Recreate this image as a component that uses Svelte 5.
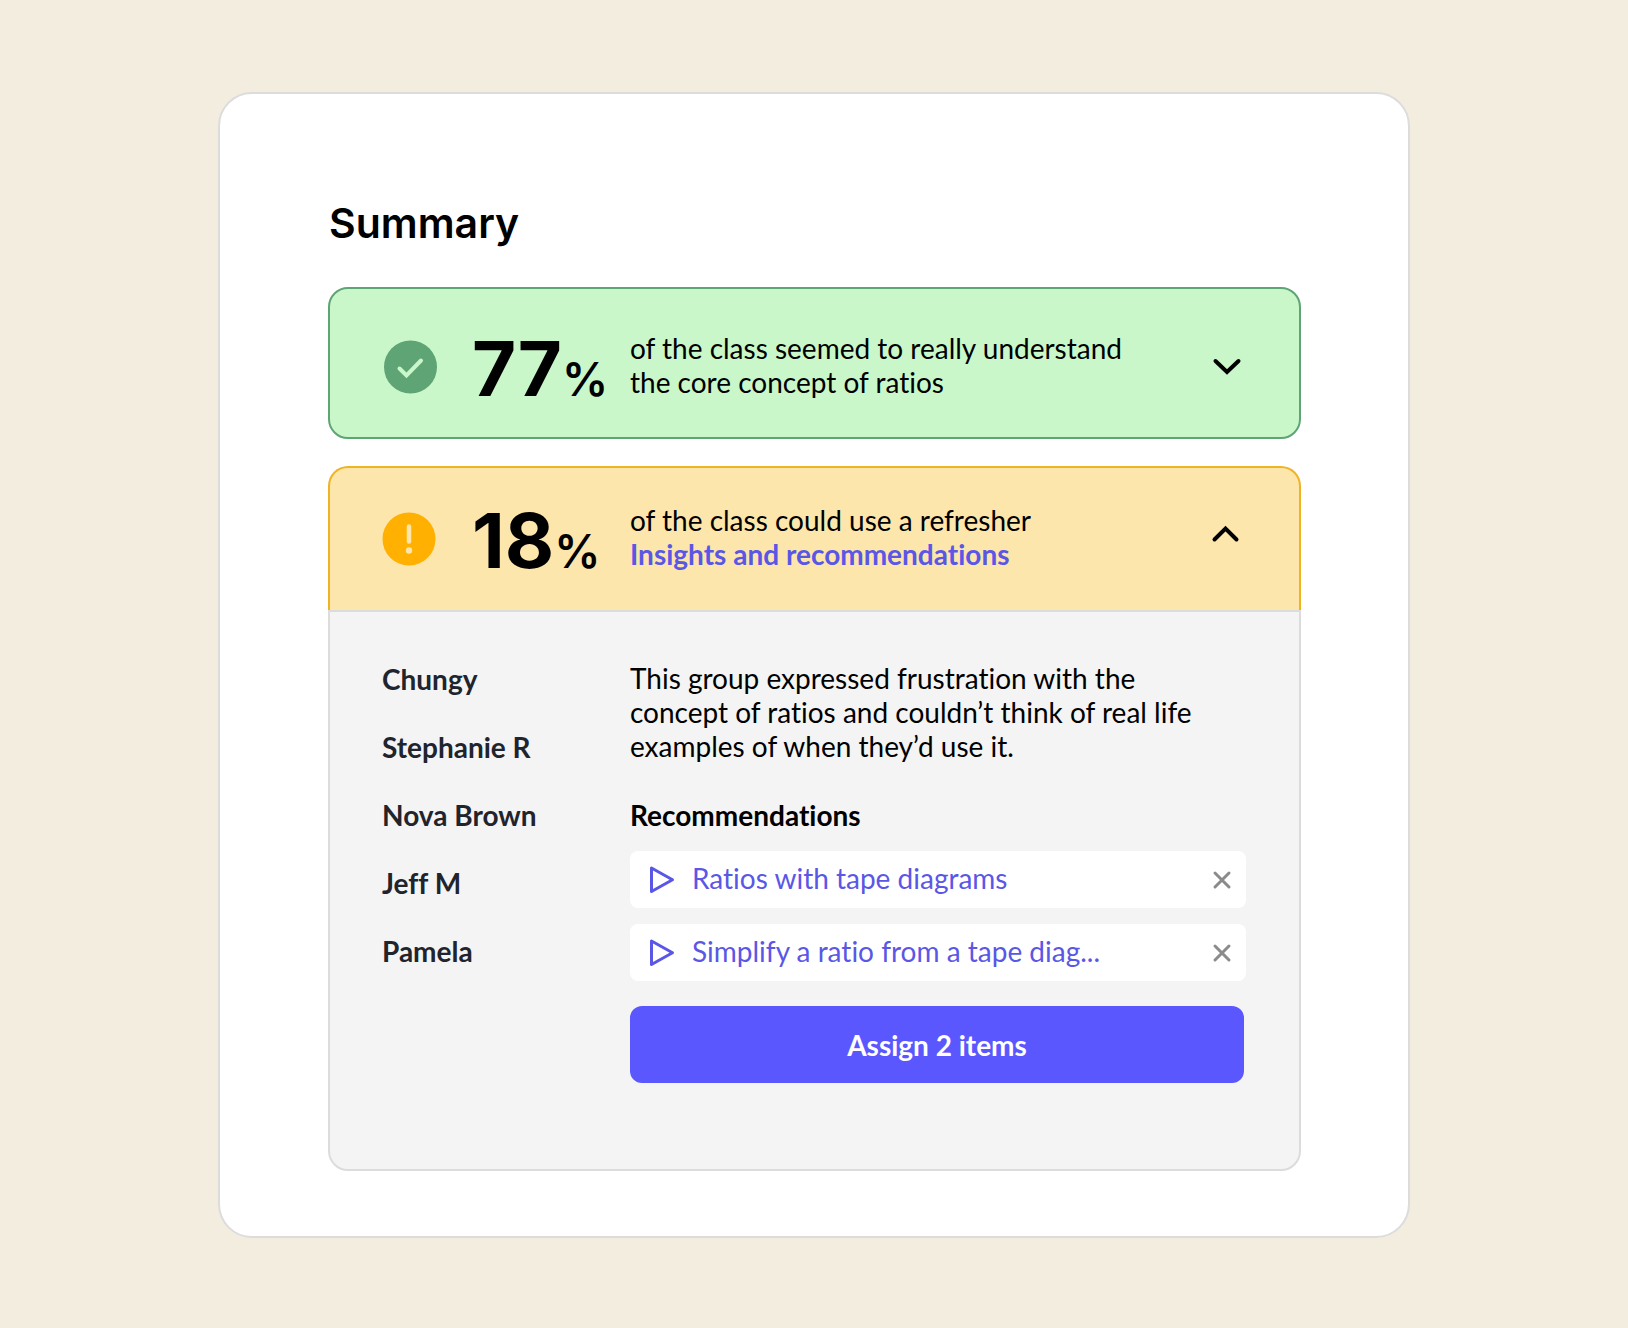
<script>
    let expanded = true;
    let students = ["Chungy", "Stephanie R", "Nova Brown", "Jeff M", "Pamela"];
    let items = [
        { id: 1, title: "Ratios with tape diagrams" },
        { id: 2, title: "Simplify a ratio from a tape diag..." }
    ];

    const toggle = () => {
        expanded = !expanded;
    };

    const removeItem = id => {
        items = items.filter(item => item.id != id);
    };
</script>

<main class="card">
    <h1>Summary</h1>

    <section class="group good">
        <div class="head">
            <svg class="status" viewBox="0 0 54 54" aria-hidden="true">
                <circle cx="27.5" cy="27" r="26.5" fill="#5fa475" />
                <path d="M16.5 28.5 L23.5 35.5 L38 20.5" fill="none" stroke="#c9f7ca" stroke-width="4" stroke-linecap="round" stroke-linejoin="miter" />
            </svg>
            <p class="percent">77<span>%</span></p>
            <p class="text">of the class seemed to really understand the core concept of ratios</p>
            <button class="chevron" aria-label="Show details">
                <svg viewBox="0 0 28 18"><path d="M2.5 3 L14 14 L25.5 3" /></svg>
            </button>
        </div>
    </section>

    <section class="group warn">
        <div class="head">
            <svg class="status" viewBox="0 0 54 54" aria-hidden="true">
                <circle cx="26" cy="27" r="26.5" fill="#ffb000" />
                <path d="M26 14.5 V29.5" stroke="#fde6ab" stroke-width="4.5" stroke-linecap="round" />
                <circle cx="26" cy="38.5" r="3.2" fill="#fde6ab" />
            </svg>
            <p class="percent">18<span>%</span></p>
            <p class="text">
                of the class could use a refresher<br />
                <a href="#insights">Insights and recommendations</a>
            </p>
            <button class="chevron" aria-label="Toggle details" aria-expanded={expanded} on:click={toggle}>
                <svg viewBox="0 0 28 18" class:closed={!expanded}><path d="M1.5 14.5 L12.5 3.5 L23.5 14.5" /></svg>
            </button>
        </div>

        {#if expanded}
            <div class="details" id="insights">
                <ul class="students">
                    {#each students as student}
                        <li>{student}</li>
                    {/each}
                </ul>
                <div class="insights">
                    <p>This group expressed frustration with the concept of ratios and couldn’t think of real life examples of when they’d use it.</p>
                    <h2>Recommendations</h2>
                    <ul class="items">
                        {#each items as item (item.id)}
                            <li>
                                <svg class="play" viewBox="0 0 26 28" aria-hidden="true">
                                    <path d="M2.5 2 V25.5 L23.5 13.7 Z" />
                                </svg>
                                <a href="#item-{item.id}">{item.title}</a>
                                <button class="remove" aria-label="Remove {item.title}" on:click={() => removeItem(item.id)}>
                                    <svg viewBox="0 0 18 18"><path d="M2 2 L16 16 M16 2 L2 16" /></svg>
                                </button>
                            </li>
                        {/each}
                    </ul>
                    <button class="assign">Assign {items.length} items</button>
                </div>
            </div>
        {/if}
    </section>
</main>

<style>
    :global(body) {
        background-color: #f3ede0;
        padding: 92px 24px;
        font-family: Lato, sans-serif;
        font-size: 28px;
        line-height: 34px;
        font-variant-ligatures: none;
        color: #000;
    }

    h1, h2, p, ul {
        margin: 0;
        padding: 0;
        font-size: 28px;
    }

    ul {
        list-style: none;
    }

    a {
        color: #5a57e6;
        text-decoration: none;
    }

    button {
        font: inherit;
        border: 0;
        padding: 0;
        background: none;
        cursor: pointer;
    }

    svg {
        display: block;
        overflow: visible;
    }

    .card {
        box-sizing: border-box;
        max-width: 1192px;
        margin: auto;
        padding: 105px 107px 65px 108px;
        background-color: #fff;
        border: 2px solid #dcdcdc;
        border-radius: 34px;
    }

    h1 {
        font-family: Inter, sans-serif;
        font-size: 41px;
        font-weight: 600;
        line-height: 48px;
        margin-bottom: 40px;
        padding-left: 1px;
    }

    .head {
        display: grid;
        grid-template-columns: 54px 123px 1fr 28px;
        column-gap: 35px;
        align-items: center;
        box-sizing: border-box;
        padding: 0 58px 0 53px;
        border: 2px solid;
        border-radius: 20px;
    }

    .good .head {
        height: 152px;
        padding-top: 8px;
        background-color: #c9f7ca;
        border-color: #5fa475;
        margin-bottom: 27px;
    }

    .warn .head {
        height: 144px;
        background-color: #fde6ab;
        border-color: #f0b323;
        border-bottom: 0;
        border-radius: 20px 20px 0 0;
    }

    .status {
        width: 54px;
        height: 54px;
    }

    .percent {
        padding-top: 12px;
        font-family: Inter, sans-serif;
        font-size: 76px;
        font-weight: 700;
        line-height: 80px;
        white-space: nowrap;
    }

    .percent span {
        font-size: 46px;
        font-weight: 600;
    }

    .text {
        max-width: 520px;
        padding-bottom: 4px;
    }

    .text a {
        font-weight: 700;
    }

    .chevron svg {
        width: 28px;
        height: 18px;
    }

    .chevron path {
        fill: none;
        stroke: #000;
        stroke-width: 4;
        stroke-linecap: round;
    }

    .chevron .closed {
        transform: rotate(180deg);
    }

    .warn .chevron {
        padding-bottom: 10px;
    }

    .details {
        display: grid;
        grid-template-columns: 248px 1fr;
        padding: 49px 53px 86px 52px;
        background-color: #f4f4f4;
        border: 2px solid #dcdcdc;
        border-radius: 0 0 20px 20px;
    }

    .students {
        display: flex;
        flex-direction: column;
        gap: 34px;
        padding-top: 1px;
        font-weight: 700;
        color: #21242c;
    }

    .insights p {
        max-width: 580px;
    }

    h2 {
        margin: 35px 0 19px;
        font-weight: 700;
    }

    .items {
        display: flex;
        flex-direction: column;
        gap: 16px;
    }

    .items li {
        display: flex;
        align-items: center;
        height: 57px;
        padding: 0 15px 0 19px;
        background-color: #fff;
        border-radius: 8px;
    }

    .items a {
        flex: 1;
        margin-left: 17px;
        padding-bottom: 3px;
    }

    .play {
        width: 26px;
        height: 28px;
    }

    .play path {
        fill: none;
        stroke: #5a57e6;
        stroke-width: 3;
        stroke-linejoin: round;
    }

    .remove svg {
        width: 18px;
        height: 18px;
    }

    .remove path {
        stroke: #8b8b8b;
        stroke-width: 3;
        stroke-linecap: round;
    }

    .assign {
        width: calc(100% - 2px);
        height: 77px;
        margin-top: 25px;
        background-color: #5a57ff;
        border-radius: 12px;
        color: #fff;
        font-weight: 700;
    }
</style>
